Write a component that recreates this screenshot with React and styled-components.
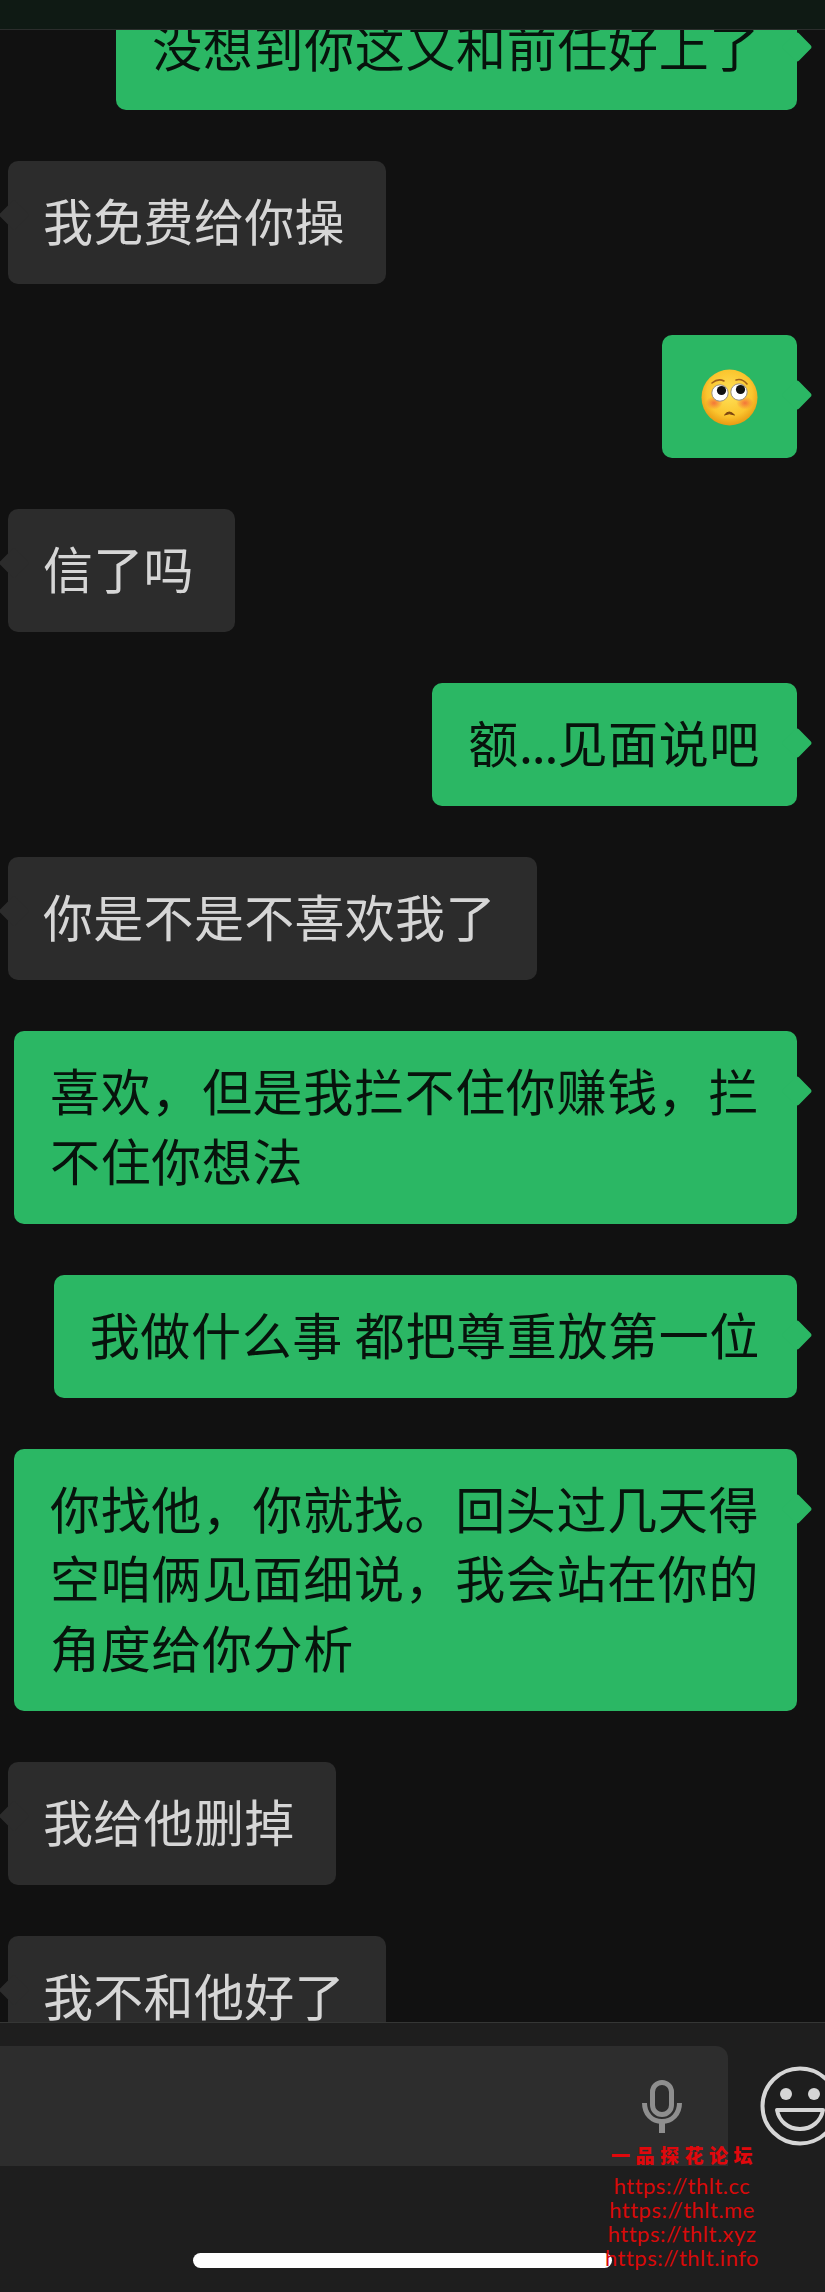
import React from "react";
import styled, { createGlobalStyle } from "styled-components";

const Global = createGlobalStyle`
  html, body { margin: 0; padding: 0; background: #111111; }
  * { box-sizing: border-box; }
`;

const Screen = styled.div`
  position: relative;
  width: 825px;
  height: 2292px;
  display: flex;
  flex-direction: column;
  overflow: hidden;
  background: #111111;
  font-family: "Noto Sans CJK SC", "Noto Sans", sans-serif;
`;

const TopBar = styled.header`
  flex: none;
  height: 30px;
  background: #0f1a14;
  border-bottom: 1px solid #2b2d2c;
  position: relative;
  z-index: 1;
`;

const Chat = styled.main`
  flex: 1;
  min-height: 0;
  overflow: hidden;
`;

const Messages = styled.div`
  display: flex;
  flex-direction: column;
  gap: 51px;
  margin-top: -42.6px;
  padding: 0 28px 0 8px;
`;

const Bubble = styled.div`
  position: relative;
  align-self: ${(p) => (p.$mine ? "flex-end" : "flex-start")};
  max-width: 783px;
  padding: ${(p) => (p.$mine ? "24px 37px 29.6px 36px" : "24px 41px 29.6px 35px")};
  border-radius: 10px;
  background: ${(p) => (p.$mine ? "#2bb764" : "#2c2c2c")};
  color: ${(p) => (p.$mine ? "#07130c" : "#d6d6d6")};
  font-size: 50px;
  letter-spacing: ${(p) => (p.$mine ? "0.65px" : "0.3px")};
  line-height: 69.4px;
  font-weight: 400;

  &::after {
    content: "";
    position: absolute;
    width: 22px;
    height: 22px;
    border-radius: 3px;
    transform: rotate(45deg);
    background: inherit;
    ${(p) => (p.$mine ? "top: 49px; right: -11px;" : "top: 43px; left: -5px;")}
  }
`;

const EmojiBubble = styled(Bubble)`
  padding: 34px 39px 32px;
  line-height: 0;
`;

const Dots = styled.span`
  letter-spacing: -1.1px;
`;

const Composer = styled.footer`
  position: relative;
  z-index: 1;
  flex: none;
  height: 270px;
  display: flex;
  align-items: flex-start;
  gap: 32px;
  padding-top: 23px;
  background: #1e1e1e;
  border-top: 1px solid #353635;
`;

const InputBox = styled.div`
  flex: none;
  width: 728px;
  height: 120px;
  display: flex;
  align-items: center;
  justify-content: flex-end;
  padding: 0 46px 0 0;
  background: #2d2d2d;
  border-radius: 0 12px 0 0;
`;

const SmileButton = styled.div`
  flex: none;
  margin-top: 20px;
  line-height: 0;
`;

const HomeBar = styled.div`
  position: absolute;
  left: 193px;
  top: 230px;
  width: 419px;
  height: 15px;
  border-radius: 8px;
  background: #ffffff;
`;

const Watermark = styled.div`
  position: absolute;
  left: 582px;
  top: 119px;
  width: 200px;
  text-align: center;
  color: #d80a0a;
`;

const WatermarkTitle = styled.div`
  font-family: "Noto Sans CJK SC", sans-serif;
  font-size: 19px;
  font-weight: 900;
  line-height: 26px;
  letter-spacing: 5.5px;
  padding-left: 5px;
  margin-bottom: 6px;
  color: #e0080c;
`;

const WatermarkUrl = styled.div`
  font-family: "Lato", sans-serif;
  font-size: 22px;
  line-height: 24px;
  letter-spacing: 0.5px;
`;

const FlushedFace = () => (
  <svg width="57" height="57" viewBox="0 0 57 57">
    <defs>
      <radialGradient id="face" cx="50%" cy="42%" r="58%">
        <stop offset="0%" stopColor="#ffe25a" />
        <stop offset="70%" stopColor="#fbc52e" />
        <stop offset="100%" stopColor="#e89a12" />
      </radialGradient>
      <radialGradient id="blush">
        <stop offset="0%" stopColor="#f2673a" stopOpacity="0.85" />
        <stop offset="100%" stopColor="#f2673a" stopOpacity="0" />
      </radialGradient>
    </defs>
    <circle cx="28.5" cy="28.5" r="28" fill="url(#face)" />
    <ellipse cx="13" cy="34" rx="8.5" ry="6.5" fill="url(#blush)" />
    <ellipse cx="44" cy="34" rx="8.5" ry="6.5" fill="url(#blush)" />
    <circle cx="19" cy="24" r="8.2" fill="#fff" stroke="#9a8f80" strokeWidth="1" />
    <circle cx="38" cy="23" r="8.2" fill="#fff" stroke="#9a8f80" strokeWidth="1" />
    <circle cx="20.5" cy="21.5" r="4.6" fill="#111" />
    <circle cx="39.5" cy="20.5" r="4.6" fill="#111" />
    <path d="M11 14 Q17 9 23 12" fill="none" stroke="#a0601a" strokeWidth="1.6" strokeLinecap="round" />
    <path d="M35 11 Q41 9 46 15" fill="none" stroke="#a0601a" strokeWidth="1.6" strokeLinecap="round" />
    <path d="M23.5 46 Q28 40 33.5 46 Q28 43.5 23.5 46Z" fill="#7a4310" stroke="#7a4310" strokeWidth="1" strokeLinejoin="round" />
  </svg>
);

const MicIcon = () => (
  <svg width="40" height="53" viewBox="0 0 40 53" fill="none" stroke="#8e8e8e">
    <rect x="10.5" y="2.5" width="19" height="32" rx="9.5" strokeWidth="5" />
    <path d="M2.5 23 C2.5 34 10 41.5 20 41.5 C30 41.5 37.5 34 37.5 23" strokeWidth="5" />
    <path d="M20 42 V53" strokeWidth="6" />
  </svg>
);

const SmileIcon = () => (
  <svg width="80" height="80" viewBox="0 0 80 80" fill="none">
    <circle cx="40" cy="40" r="37.5" stroke="#d6d6d6" strokeWidth="4" />
    <circle cx="26" cy="28" r="6" fill="#d6d6d6" />
    <circle cx="54" cy="28" r="6" fill="#d6d6d6" />
    <path d="M17 44 H63 C61 55 52 63 40 63 C28 63 19 55 17 44 Z" stroke="#d6d6d6" strokeWidth="4" strokeLinejoin="round" />
  </svg>
);

const messages = [
  { mine: true, text: "没想到你这又和前任好上了" },
  { mine: false, text: "我免费给你操" },
  { mine: true, emoji: true },
  { mine: false, text: "信了吗" },
  { mine: true, text: <>额<Dots>...</Dots>见面说吧</> },
  { mine: false, text: "你是不是不喜欢我了" },
  { mine: true, text: "喜欢，但是我拦不住你赚钱，拦不住你想法" },
  { mine: true, text: "我做什么事 都把尊重放第一位" },
  { mine: true, text: "你找他，你就找。回头过几天得空咱俩见面细说，我会站在你的角度给你分析" },
  { mine: false, text: "我给他删掉" },
  { mine: false, text: "我不和他好了" },
];

export default function App() {
  return (
    <Screen>
      <Global />
      <TopBar />
      <Chat>
        <Messages>
          {messages.map((m, i) =>
            m.emoji ? (
              <EmojiBubble key={i} $mine={m.mine}>
                <FlushedFace />
              </EmojiBubble>
            ) : (
              <Bubble key={i} $mine={m.mine}>
                {m.text}
              </Bubble>
            )
          )}
        </Messages>
      </Chat>
      <Composer>
        <InputBox>
          <MicIcon />
        </InputBox>
        <SmileButton>
          <SmileIcon />
        </SmileButton>
        <HomeBar />
        <Watermark>
          <WatermarkTitle>一品探花论坛</WatermarkTitle>
          <WatermarkUrl>https://thlt.cc</WatermarkUrl>
          <WatermarkUrl>https://thlt.me</WatermarkUrl>
          <WatermarkUrl>https://thlt.xyz</WatermarkUrl>
          <WatermarkUrl>https://thlt.info</WatermarkUrl>
        </Watermark>
      </Composer>
    </Screen>
  );
}
